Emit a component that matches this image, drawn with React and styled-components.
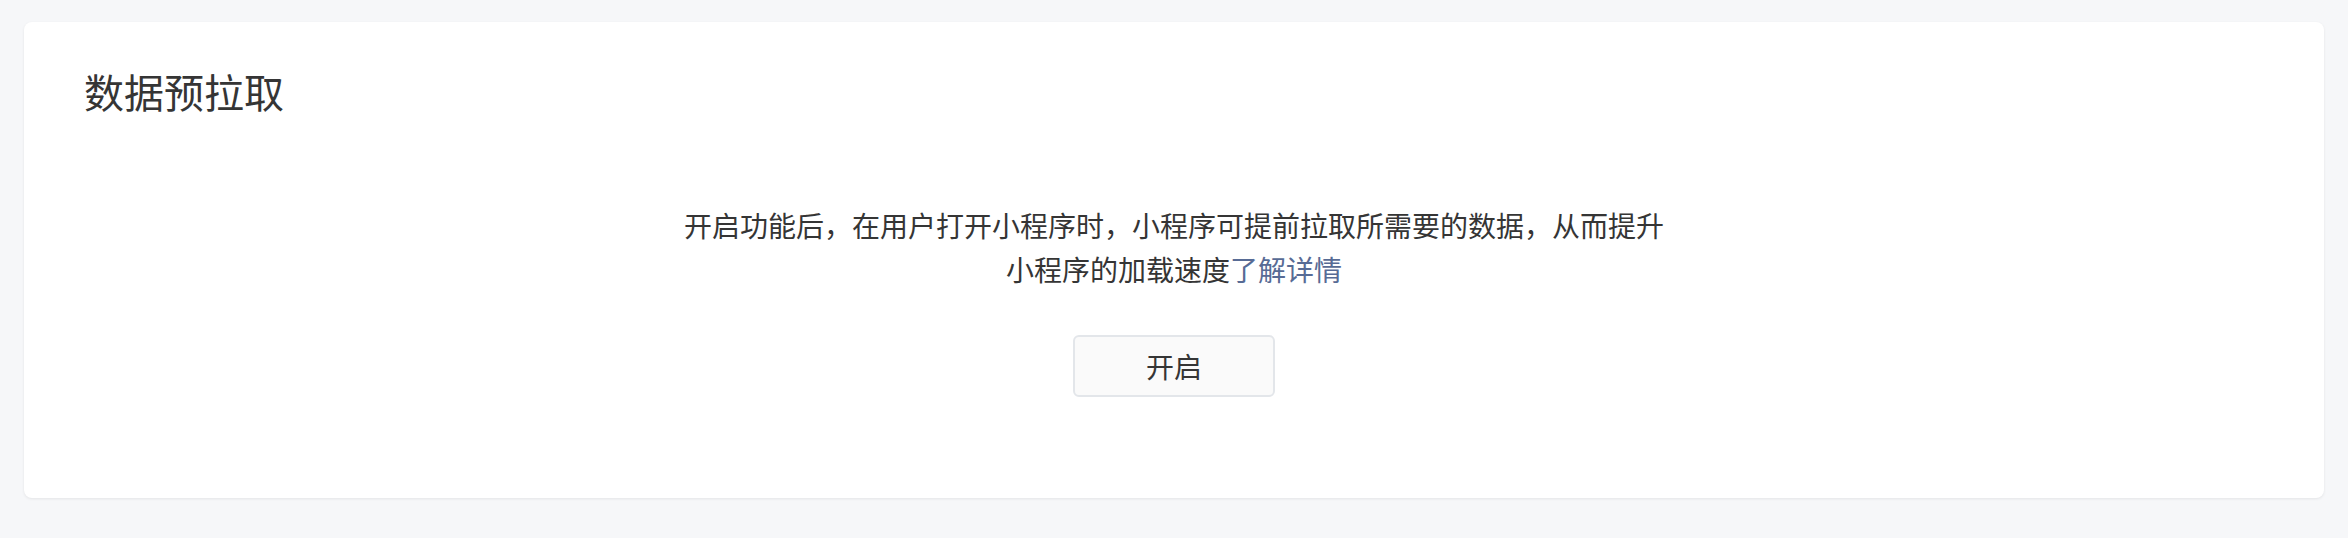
import React from "react";
import styled, { createGlobalStyle } from "styled-components";

const GlobalStyle = createGlobalStyle`
  html, body {
    margin: 0;
    padding: 0;
    background-color: #f6f7f9;
    font-family: "Noto Sans CJK SC", "Noto Sans", sans-serif;
    color: #333;
  }
`;

const Page = styled.div`
  padding: 22px 24px 41px;
`;

const Card = styled.section`
  background-color: white;
  border-radius: 8px;
  box-shadow: 0 1px 3px rgba(0, 0, 0, 0.08);
  padding: 41px 60px 101px;
  display: flex;
  flex-direction: column;
`;

const Title = styled.h2`
  margin: 0;
  font-size: 40px;
  font-weight: normal;
  line-height: 56px;
  color: #353535;
`;

const Body = styled.div`
  margin-top: 84px;
  display: flex;
  flex-direction: column;
  align-items: center;
`;

const Desc = styled.p`
  margin: 0;
  max-width: 984px;
  font-size: 28px;
  line-height: 44px;
  text-align: center;
  color: #353535;
`;

const Link = styled.a`
  color: #576b95;
  text-decoration: none;
  cursor: pointer;
`;

const Button = styled.button`
  margin-top: 44px;
  width: 202px;
  height: 62px;
  border: 2px solid #e3e6ea;
  border-radius: 6px;
  background-color: #fafafa;
  font-family: inherit;
  font-size: 28px;
  color: #353535;
  cursor: pointer;
`;

const App = () => {
  return (
    <>
      <GlobalStyle />
      <Page>
        <Card>
          <Title>数据预拉取</Title>
          <Body>
            <Desc>
              开启功能后，在用户打开小程序时，小程序可提前拉取所需要的数据，从而提升小程序的加载速度
              <Link>了解详情</Link>
            </Desc>
            <Button>开启</Button>
          </Body>
        </Card>
      </Page>
    </>
  );
};

export default App;
